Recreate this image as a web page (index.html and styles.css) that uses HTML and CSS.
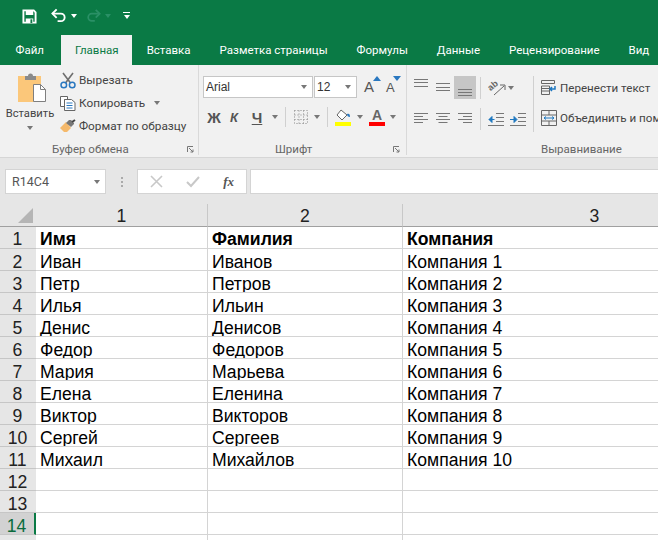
FILE: index.html
```html
<!DOCTYPE html>
<html lang="ru">
<head>
<meta charset="utf-8">
<title>Excel</title>
<link rel="stylesheet" href="styles.css">
</head>
<body>
<div class="app">
  <header class="qat">
    <svg class="q-save" width="15" height="15" viewBox="0 0 16 16"><path d="M1.500 1.500h11l2 2v11h-13z" fill="none" stroke="#fff" stroke-width="2"/><path d="M4 2h8v4.500H4zM4 10h8v5H4z" fill="#fff"/><path d="M9 11h2v4H9z" fill="#0a7a45"/></svg>
    <svg class="q-undo" width="16" height="15" viewBox="0 0 17 15"><path d="M1.500 5.500h9a4 4 0 0 1 0 8H7" fill="none" stroke="#fff" stroke-width="2"/><path d="M6 1 1.500 5.500 6 10" fill="none" stroke="#fff" stroke-width="2"/></svg>
    <span class="caret caret-w q-c1"></span>
    <svg class="q-redo" width="15" height="15" viewBox="0 0 17 15"><path d="M15.500 5.500h-9a4 4 0 0 0 0 8H10" fill="none" stroke="#2a9066" stroke-width="2"/><path d="M11 1l4.500 4.500L11 10" fill="none" stroke="#2a9066" stroke-width="2"/></svg>
    <span class="caret caret-dim q-c2"></span>
    <span class="q-more"><i></i><span class="caret caret-w"></span></span>
  </header>
  <nav class="tabs">
    <span class="tab">Файл</span>
    <span class="tab tab-active">Главная</span>
    <span class="tab">Вставка</span>
    <span class="tab">Разметка страницы</span>
    <span class="tab">Формулы</span>
    <span class="tab">Данные</span>
    <span class="tab">Рецензирование</span>
    <span class="tab">Вид</span>
  </nav>
  <section class="ribbon">
    <div class="group g-clip">
      <div class="clip-body">
        <div class="paste">
          <svg width="28" height="29" viewBox="0 0 28 29"><path d="M0 3h23v26H0z" fill="#fbc77a"/><path d="M7 3h3a2.500 2.500 0 0 1 5 0h3v4H7z" fill="#8a8a8a"/><path d="M15.500 11.500h7l5 5v12h-12z" fill="#fff" stroke="#7f7f7f"/><path d="M22.500 11.500v5h5" fill="none" stroke="#7f7f7f"/></svg>
          <span class="paste-label">Вставить</span>
          <span class="caret"></span>
        </div>
        <div class="clip-list">
          <div class="clip-row">
            <svg width="16" height="17" viewBox="0 0 16 17"><path d="M3 1l7.500 10M13 1 5.500 11" stroke="#6f6f6f" stroke-width="1.600" fill="none"/><circle cx="3.800" cy="13" r="2.800" fill="none" stroke="#2a78c0" stroke-width="1.500"/><circle cx="12.200" cy="13" r="2.800" fill="none" stroke="#2a78c0" stroke-width="1.500"/></svg>
            <span>Вырезать</span>
          </div>
          <div class="clip-row">
            <svg width="16" height="15" viewBox="0 0 16 15"><path d="M.5.500h7v3h-3v7h-4z" fill="#fff" stroke="#666"/><path d="M4.500 3.500h7l3.500 3v8H4.500z" fill="#fff" stroke="#666"/><path d="M6.500 7h6M6.500 9.500h6M6.500 12h6" stroke="#2a78c0"/></svg>
            <span>Копировать</span>
            <span class="caret caret-copy"></span>
          </div>
          <div class="clip-row">
            <svg width="16" height="14" viewBox="0 0 16 14"><path d="M0 9 6 3l5 6-4 4H4z" fill="#f5b96b"/><path d="m6 4 3-3 2 0 3 3v1l-3 3z" fill="#777"/><path d="m12 3 3-2" stroke="#444" stroke-width="2"/></svg>
            <span>Формат по образцу</span>
          </div>
        </div>
      </div>
      <div class="g-foot g-foot-clip"><span>Буфер обмена</span><svg class="launch" width="7" height="7" viewBox="0 0 7 7"><path d="M.5 6V.5H6" fill="none" stroke="#777"/><path d="M2 2l4 4M3.500 6H6V3.500" fill="none" stroke="#777"/></svg></div>
    </div>
    <div class="group g-font">
      <div class="font-top">
        <span class="combo combo-name">Arial<span class="caret"></span></span>
        <span class="combo combo-size">12<span class="caret"></span></span>
        <span class="grow">A<svg width="8" height="5" viewBox="0 0 8 5"><path d="M0 5l4-5 4 5z" fill="#2a78c0"/></svg></span>
        <span class="shrink">A<svg width="8" height="5" viewBox="0 0 8 5"><path d="M0 0l4 5 4-5z" fill="#2a78c0"/></svg></span>
      </div>
      <div class="font-tools">
        <b class="fmt f-b">Ж</b>
        <b class="fmt f-i">К</b>
        <b class="fmt f-u">Ч</b>
        <span class="caret c-u"></span>
        <i class="vsep s1"></i>
        <svg class="t-border" width="14" height="14" viewBox="0 0 14 14"><path d="M.5.500h13v13H.5zM5 .5v13M9.500.5v13M.5 5h13M.5 9.500h13" fill="none" stroke="#888" stroke-dasharray="1 2"/></svg>
        <span class="caret c-b"></span>
        <i class="vsep s2"></i>
        <span class="fill"><svg width="16" height="12" viewBox="0 0 16 12"><path d="M6 1l6 5-5 5-5-5z" fill="#fff" stroke="#666"/><path d="M12 5c2-1 3 0 3 3-2 0-3-1-3-3z" fill="#2a78c0"/></svg><i></i></span>
        <span class="caret c-f"></span>
        <span class="color">A<i></i></span>
        <span class="caret c-c"></span>
      </div>
      <div class="g-foot g-foot-font"><span>Шрифт</span><svg class="launch" width="7" height="7" viewBox="0 0 7 7"><path d="M.5 6V.5H6" fill="none" stroke="#777"/><path d="M2 2l4 4M3.500 6H6V3.500" fill="none" stroke="#777"/></svg></div>
    </div>
    <div class="group g-align">
      <div class="align-body">
        <div class="align-grid">
          <div class="a-row a-row-1">
            <span class="abtn"><svg width="14" height="23" viewBox="0 0 14 23"><path d="M0 3.500h14M0 6.500h14M0 10.500h14" stroke="#777"/></svg></span>
            <span class="abtn"><svg width="14" height="23" viewBox="0 0 14 23"><path d="M0 7.500h14M0 11.500h14M0 14.500h14" stroke="#777"/></svg></span>
            <span class="abtn abtn-on"><svg width="14" height="23" viewBox="0 0 14 23"><path d="M0 13.500h14M0 16.500h14M0 19.500h14" stroke="#777"/></svg></span>
            <i class="vsep a-s"></i>
            <svg class="a-orient" width="18" height="18" viewBox="0 0 18 18"><text x="1" y="10" transform="rotate(-40 5 9)" class="a-orient-text">ab</text><path d="M6 16 16 7" fill="none" stroke="#666"/><path d="M12 6h5v5" fill="none" stroke="#666"/></svg>
            <span class="caret a-orc"></span>
          </div>
          <div class="a-row a-row-2">
            <span class="abtn"><svg width="14" height="12" viewBox="0 0 14 12"><path d="M0 .5h14M0 3.500h9M0 6.500h14M0 9.500h9" stroke="#777"/></svg></span>
            <span class="abtn"><svg width="14" height="12" viewBox="0 0 14 12"><path d="M0 .5h14M2.500 3.500h9M0 6.500h14M2.500 9.500h9" stroke="#777"/></svg></span>
            <span class="abtn"><svg width="14" height="12" viewBox="0 0 14 12"><path d="M0 .5h14M5 3.500h9M0 6.500h14M5 9.500h9" stroke="#777"/></svg></span>
            <i class="vsep a-s"></i>
            <svg class="a-ind a-ind-first" width="16" height="13" viewBox="0 0 16 13"><path d="M8 .5h8M8 4.500h8M8 8.500h8M0 12.500h16" stroke="#777"/><path d="M6.500 6.500H1M4 3.500l-3 3 3 3z" fill="#1f78c0" stroke="#1f78c0"/></svg>
            <svg class="a-ind" width="16" height="13" viewBox="0 0 16 13"><path d="M8 .5h8M8 4.500h8M8 8.500h8M0 12.500h16" stroke="#777"/><path d="M0 6.500h6M4 3.500l3 3-3 3z" fill="#1f78c0" stroke="#1f78c0"/></svg>
          </div>
        </div>
        <i class="vsep a-long"></i>
        <div class="wrap-col">
          <div class="wrap-row">
            <svg width="16" height="16" viewBox="0 0 16 16"><path d="M.5.500h13v3H.5zM.5 8.500h8M.5 11h8" fill="none" stroke="#666"/><path d="M.5 6h8v8.500h-8z" fill="none" stroke="#666"/><path d="M14 6v3h-5M11 7 9 9l2 2" fill="none" stroke="#1f78c0" stroke-width="1.500"/></svg>
            <span>Перенести текст</span>
          </div>
          <div class="wrap-row">
            <svg width="16" height="16" viewBox="0 0 16 16"><path d="M.5.500h15v15H.5zM.5 5h15M.5 11h15M8 .5V5M8 11v4.500" fill="none" stroke="#666"/><path d="M3 8h10M5 6.500 3 8l2 1.500M11 6.500 13 8l-2 1.500" fill="none" stroke="#1f78c0"/></svg>
            <span>Объединить и поместить в центре</span>
          </div>
        </div>
      </div>
      <div class="g-foot g-foot-align"><span>Выравнивание</span></div>
    </div>
  </section>
  <section class="fbar">
    <div class="namebox"><span>R14C4</span><span class="caret"></span></div>
    <div class="grip"><i></i><i></i><i></i></div>
    <div class="fbtns">
      <svg width="13" height="13" viewBox="0 0 13 13"><path d="M1 1l11 11M12 1 1 12" stroke="#c8c8c8" stroke-width="1.600"/></svg>
      <svg width="14" height="13" viewBox="0 0 14 13"><path d="M1 7l4 4 8-9" fill="none" stroke="#c8c8c8" stroke-width="2"/></svg>
      <em>fx</em>
    </div>
    <div class="finput"></div>
  </section>
  <section class="sheet">
    <div class="grid">
      <div class="hd corner"><i></i></div><div class="hd col">1</div><div class="hd col">2</div><div class="hd col">3</div>
      <div class="rh rh-first">1</div><div class="c strong">Имя</div><div class="c strong">Фамилия</div><div class="c strong">Компания</div>
      <div class="rh">2</div><div class="c">Иван</div><div class="c">Иванов</div><div class="c">Компания 1</div>
      <div class="rh">3</div><div class="c">Петр</div><div class="c">Петров</div><div class="c">Компания 2</div>
      <div class="rh">4</div><div class="c">Илья</div><div class="c">Ильин</div><div class="c">Компания 3</div>
      <div class="rh">5</div><div class="c">Денис</div><div class="c">Денисов</div><div class="c">Компания 4</div>
      <div class="rh">6</div><div class="c">Федор</div><div class="c">Федоров</div><div class="c">Компания 5</div>
      <div class="rh">7</div><div class="c">Мария</div><div class="c">Марьева</div><div class="c">Компания 6</div>
      <div class="rh">8</div><div class="c">Елена</div><div class="c">Еленина</div><div class="c">Компания 7</div>
      <div class="rh">9</div><div class="c">Виктор</div><div class="c">Викторов</div><div class="c">Компания 8</div>
      <div class="rh">10</div><div class="c">Сергей</div><div class="c">Сергеев</div><div class="c">Компания 9</div>
      <div class="rh">11</div><div class="c">Михаил</div><div class="c">Михайлов</div><div class="c">Компания 10</div>
      <div class="rh">12</div><div class="c"></div><div class="c"></div><div class="c"></div>
      <div class="rh">13</div><div class="c"></div><div class="c"></div><div class="c"></div>
      <div class="rh rh-active">14</div><div class="c"></div><div class="c"></div><div class="c"></div>
      <div class="rh"></div><div class="c"></div><div class="c"></div><div class="c"></div>
    </div>
  </section>
</div>
</body>
</html>
```
FILE: styles.css
```css
* { box-sizing: border-box; }
html, body { margin: 0; padding: 0; }
body { width: 658px; height: 540px; overflow: hidden; background: #fff; font-family: Roboto, "Noto Sans", sans-serif; color: #444; }
i, em { font-style: normal; }
.app { width: 658px; height: 540px; overflow: hidden; display: flex; flex-direction: column; }

.caret { display: inline-block; width: 0; height: 0; border-left: 3.500px solid transparent; border-right: 3.500px solid transparent; border-top: 4px solid #777; flex: none; }
.caret-w { border-top-color: #fff; }
.caret-dim { border-top-color: #2a9066; }

.qat { height: 35px; background: #0a7a45; display: flex; align-items: center; padding: 0 0 4px 22px; flex: none; }
.q-save { margin-top: 1px; }
.q-undo { margin-left: 14px; }
.q-c1 { margin-left: 4px; }
.q-redo { margin-left: 9px; }
.q-c2 { margin-left: 4px; }
.q-more { margin-left: 12px; display: flex; flex-direction: column; align-items: center; gap: 2px; }
.q-more i { width: 7px; height: 1px; background: #fff; }

.tabs { height: 30px; background: #0a7a45; display: flex; padding-left: 1px; flex: none; }
.tab { color: #fff; font-size: 11.500px; line-height: 30px; padding: 0 14.500px; white-space: nowrap; }
.tab-active { background: #f1f1f1; color: #0a7a45; margin-left: 3px; padding: 0 13.500px; }

.ribbon { height: 93px; background: #f1f1f1; border-bottom: 1px solid #d6d6d6; display: flex; flex: none; box-shadow: 0 1px 0 #fafafa; font-size: 11.800px; color: #444; }
.group { display: flex; flex-direction: column; position: relative; height: 90px; border-right: 1px solid #d9d9d9; }
.g-foot { height: 16px; margin-top: auto; margin-bottom: -2px; font-size: 11.500px; color: #666; display: flex; align-items: center; white-space: nowrap; }
.launch { flex: none; }

.g-clip { width: 199px; }
.clip-body { display: flex; padding: 5px 0 0 6px; }
.paste { width: 48px; display: flex; flex-direction: column; align-items: center; }
.paste svg { margin-top: 3px; margin-left: 4px; }
.paste-label { margin-top: 4px; line-height: 16px; font-size: 11.200px; }
.paste .caret { margin-top: 4px; }
.clip-list { margin-left: 6px; display: flex; flex-direction: column; gap: 3px; }
.clip-row { height: 20px; display: flex; align-items: center; gap: 3px; white-space: nowrap; }
.caret-copy { margin-left: 6px; }
.g-foot-clip { padding-left: 52px; }
.g-foot-clip .launch { margin-left: 58px; }

.g-font { width: 208px; padding-left: 4px; }
.font-top { display: flex; align-items: center; margin-top: 11px; height: 22px; }
.combo { height: 22px; background: #fff; border: 1px solid #c6c6c6; display: flex; align-items: center; justify-content: space-between; padding: 0 5px 0 2px; font-family: "Liberation Sans", Arial, sans-serif; font-size: 12px; color: #333; }
.combo-name { width: 110px; }
.combo-size { width: 43px; margin-left: 1px; font-size: 12px; }
.grow, .shrink { position: relative; display: inline-block; font-family: "Liberation Sans", Arial, sans-serif; color: #555; }
.grow { font-size: 15px; margin-left: 7px; width: 20px; line-height: 16px; }
.shrink { font-size: 13px; margin-left: 2px; width: 18px; line-height: 16px; padding-top: 1px; }
.grow svg { position: absolute; left: 9px; top: -3px; }
.shrink svg { position: absolute; left: 7px; top: -3px; }
.font-tools { display: flex; align-items: center; margin-top: 8px; height: 22px; padding-left: 3px; }
.fmt { font-family: "Liberation Sans", Arial, sans-serif; font-size: 15px; color: #555; width: 16px; text-align: center; }
.f-i { font-style: italic; margin-left: 4px; font-size: 13px; }
.f-u { margin-left: 7px; text-decoration: underline; }
.c-u { margin-left: 7px; }
.vsep { display: block; width: 1px; background: #d0d0d0; flex: none; }
.s1 { height: 20px; margin-left: 7px; }
.t-border { margin-left: 8px; }
.c-b { margin-left: 6px; }
.s2 { height: 20px; margin-left: 7px; }
.fill { display: flex; flex-direction: column; align-items: center; width: 16px; margin-left: 7px; }
.fill i { display: block; width: 16px; height: 4px; background: #ffff00; margin-top: 1px; }
.c-f { margin-left: 6px; }
.color { display: flex; flex-direction: column; align-items: center; width: 16px; margin-left: 6px; font-family: "Liberation Sans", Arial, sans-serif; font-size: 14px; font-weight: bold; color: #666; line-height: 13px; }
.color i { display: block; width: 16px; height: 4px; background: #ff0000; }
.c-c { margin-left: 5px; }
.g-foot-font { padding-left: 72px; }
.g-foot-font .launch { margin-left: 81px; }

.g-align { flex: 1; border-right: 0; padding-left: 3px; overflow: hidden; }
.align-body { display: flex; margin-top: 11px; }
.align-grid { width: 123px; flex: none; display: flex; flex-direction: column; gap: 7px; }
.a-row { display: flex; align-items: center; height: 23px; }
.a-row-2 { height: 24px; margin-top: 1px; }
.abtn { width: 22px; height: 23px; display: flex; align-items: center; justify-content: center; }
.abtn-on { background: #c6c6c6; }
.a-s { height: 22px; margin-left: 4px; }
.a-orient { margin-left: 7px; overflow: visible; }
.a-orient-text { font-family: "Liberation Sans", Arial, sans-serif; font-size: 9px; font-weight: bold; fill: #666; }
.a-orc { margin-left: 2px; }
.a-ind { margin-left: 6px; }
.a-ind-first { margin-left: 7px; }
.a-long { height: 56px; }
.wrap-col { margin-left: 7px; margin-top: 1px; display: flex; flex-direction: column; gap: 8px; }
.wrap-row { display: flex; align-items: center; gap: 3px; height: 22px; white-space: nowrap; font-size: 11.600px; }
.g-foot-align { padding-left: 131px; }

.fbar { height: 46px; background: #e6e6e6; display: flex; align-items: flex-start; padding: 11px 0 0 5px; flex: none; }
.namebox { width: 101px; height: 25px; background: #fff; border: 1px solid #d4d4d4; display: flex; align-items: center; justify-content: space-between; padding: 0 5px 0 6px; font-size: 12.500px; color: #555; }
.grip { width: 31px; height: 25px; display: flex; flex-direction: column; align-items: center; justify-content: center; gap: 2px; }
.grip i { width: 2px; height: 2px; background: #aaa; }
.fbtns { width: 110px; height: 25px; background: #fff; border: 1px solid #d4d4d4; display: flex; align-items: center; justify-content: space-between; padding: 0 12px; }
.fbtns em { font-family: "Liberation Serif", serif; font-style: italic; font-weight: bold; font-size: 13px; color: #555; }
.finput { flex: 1; height: 25px; margin-left: 3px; background: #fff; border: 1px solid #d4d4d4; border-right: 0; }

.sheet { flex: 1; overflow: hidden; background: #e6e6e6; }
.grid { display: grid; width: 787px; grid-template-columns: 36px 172px 195px 384px; grid-template-rows: 23px repeat(15, 22px); font-family: "Liberation Sans", Arial, sans-serif; font-size: 17.600px; color: #000; }
.hd { background: #e6e6e6; border-bottom: 1px solid #a0a0a0; }
.corner { position: relative; }
.corner i { position: absolute; left: 18px; top: 4px; width: 0; height: 0; border-style: solid; border-width: 0 0 15px 15px; border-color: transparent transparent #b5b5b5 transparent; }
.col { border-right: 1px solid #c8c8c8; text-align: center; line-height: 25px; color: #222; overflow: hidden; }
.rh { background: #e6e6e6; border-bottom: 1px solid #c6c6c6; text-align: center; padding: 2px 1px 0 0; line-height: 23px; color: #222; overflow: hidden; }
.rh-first { padding-top: 1px; }
.rh-active { background: #d2d2d2; color: #0a6b3c; border-right: 2px solid #0a7a45; }
.c { background: #fff; border-right: 1px solid #d4d4d4; border-bottom: 1px solid #d4d4d4; padding: 2px 0 0 4px; line-height: 23px; white-space: nowrap; overflow: hidden; }
.c.strong { font-weight: bold; padding-top: 1px; }
```
